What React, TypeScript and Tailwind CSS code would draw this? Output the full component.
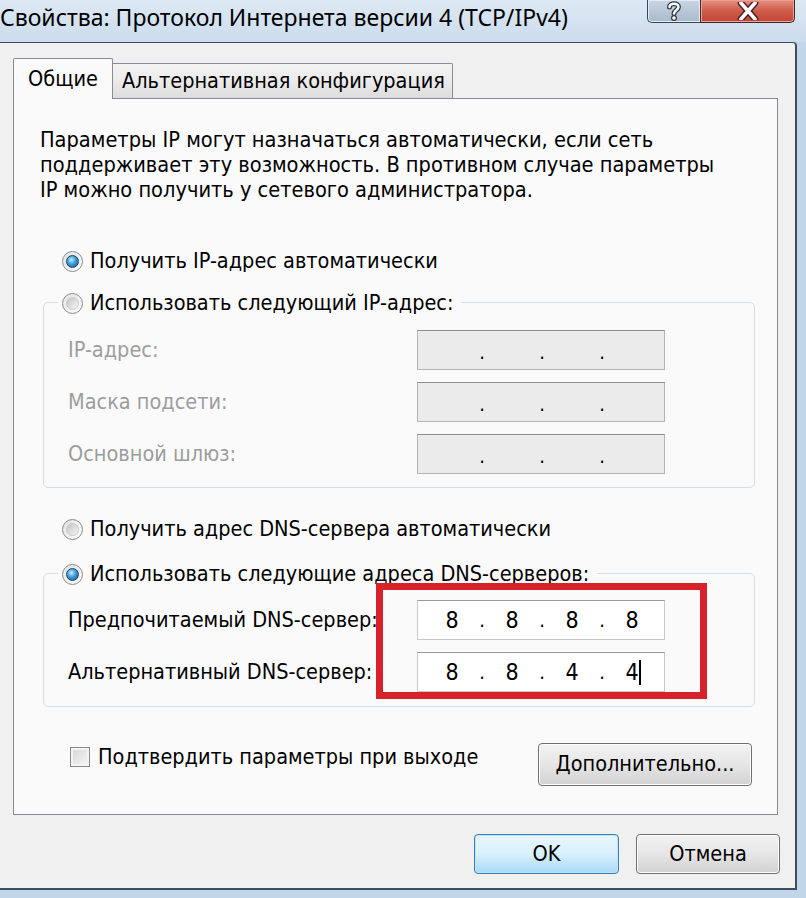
import React from "react";

const F = "font-['DejaVu_Sans_Condensed','DejaVu_Sans',sans-serif]";

function Radio({ checked }: { checked?: boolean }) {
  return (
    <span className="inline-flex h-[21px] w-[21px] shrink-0 items-center justify-center rounded-full border border-[#8a8a8a] bg-gradient-to-br from-[#e2e2e2] to-[#fdfdfd]">
      {checked ? (
        <span className="h-[13px] w-[13px] rounded-full border border-[#1b476b] bg-[radial-gradient(circle_at_40%_35%,#c6ecff_0%,#3a9ad8_45%,#145586_100%)]" />
      ) : (
        <span className="h-[13px] w-[13px] rounded-full border border-[#c8c8c8] bg-gradient-to-br from-[#c4c4c4] to-[#f6f6f6]" />
      )}
    </span>
  );
}

function IpBox({ values, disabled, caret }: { values: string[]; disabled?: boolean; caret?: boolean }) {
  return (
    <div
      className={
        disabled
          ? "flex h-[40px] w-[248px] shrink-0 items-center border border-[#b5b5b5] border-t-[#8d8d8d] bg-[#ebebeb] pl-[10px] pt-[4px]"
          : "flex h-[40px] w-[248px] shrink-0 items-center border border-[#c9c9c9] border-t-[#9a9a9a] bg-white pl-[10px]"
      }
    >
      {values.map((v, i) => (
        <React.Fragment key={i}>
          <span className="relative w-[48px] text-center text-[23px] leading-[30px] text-black">
            {v}
            {caret && i === 3 ? (
              <span className="absolute left-[31px] top-[3px] h-[25px] w-[2px] bg-black" />
            ) : null}
          </span>
          {i < 3 ? (
            <span className="w-[12px] text-center text-[20px] leading-[30px] text-black">.</span>
          ) : null}
        </React.Fragment>
      ))}
    </div>
  );
}

function WinButton({ children, className, primary }: { children: React.ReactNode; className: string; primary?: boolean }) {
  return (
    <div
      className={
        (primary
          ? "border-[#3c7fb1] bg-gradient-to-b from-[#eaf6fd] via-[#d9f0fc] to-[#a7d9f5] shadow-[inset_0_0_0_1px_#bde4f8] "
          : "border-[#707070] bg-gradient-to-b from-[#f2f2f2] via-[#e6e6e6] to-[#d1d1d1] shadow-[inset_0_0_0_1px_#fcfcfc] ") +
        "flex items-center justify-center rounded-[4px] border text-[21.5px] text-black " +
        className
      }
    >
      {children}
    </div>
  );
}

export default function App() {
  return (
    <div className={"flex h-[898px] w-[806px] flex-col overflow-hidden bg-[#c2d6ea] " + F}>
      {/* Title bar */}
      <div className="flex h-[42px] shrink-0 items-start bg-gradient-to-b from-[#dde9f4] to-[#ccdcec]">
        <div className="whitespace-nowrap pt-[2px] font-['Noto_Sans',sans-serif] text-[23px] leading-[30px] text-black">
          Свойства: Протокол Интернета версии 4 (TCP/IPv4)
        </div>
        <div className="ml-auto mr-[11px] flex h-[23px]">
          <div className="flex h-[23px] w-[53px] items-center justify-center rounded-bl-[5px] border-b border-l border-[#3a4656] bg-gradient-to-b from-[#c9d6e3] to-[#a9bacb] shadow-[inset_0_0_0_1px_#e3ebf3]">
            <svg width="16" height="20" viewBox="0 0 16 20">
              <path d="M3.5 6 C3.5 1.5 12.5 1.5 12.5 6 C12.5 9 8 9.5 8 12.5" fill="none" stroke="#2d3a4a" strokeWidth="5" strokeLinecap="round" />
              <path d="M3.5 6 C3.5 1.5 12.5 1.5 12.5 6 C12.5 9 8 9.5 8 12.5" fill="none" stroke="#ffffff" strokeWidth="2.5" strokeLinecap="round" />
              <circle cx="8" cy="17" r="2.4" fill="#ffffff" stroke="#2d3a4a" strokeWidth="1.2" />
            </svg>
          </div>
          <div className="flex h-[23px] w-[95px] items-center justify-center rounded-br-[5px] border-b border-l border-r border-[#3a2a2a] bg-gradient-to-b from-[#e48f82] via-[#cf5a4a] to-[#c44434] shadow-[inset_0_0_0_1px_#eaa297]">
            <svg width="24" height="18" viewBox="0 0 24 18">
              <path d="M5 1 L19 17 M19 1 L5 17" stroke="#4a2222" strokeWidth="6.5" strokeLinecap="round" />
              <path d="M5 1 L19 17 M19 1 L5 17" stroke="#ffffff" strokeWidth="3.6" strokeLinecap="round" />
            </svg>
          </div>
        </div>
      </div>

      {/* Client area */}
      <div className="mb-[8px] mr-[9px] flex flex-1 flex-col rounded-tr-[4px] border-b-2 border-r-2 border-t border-[#3e4d60] bg-[#f0f0f0] pl-[13px] pr-[17px] pt-[15px]">
        {/* Tabs */}
        <div className="flex h-[40px] items-end">
          <div className="relative z-10 -mb-px flex h-[41px] w-[100px] items-start justify-center rounded-t-[2px] border border-b-0 border-[#898c95] bg-[#fafafa] pt-[7px] text-[21.5px] leading-[26px] text-black">
            Общие
          </div>
          <div className="flex h-[35px] items-center rounded-tr-[2px] border border-b-0 border-l-0 border-[#898c95] bg-gradient-to-b from-[#f3f3f3] via-[#ebebeb] to-[#dcdcdc] pl-[9px] pr-[7px] text-[21.5px] leading-[26px] text-black">
            Альтернативная конфигурация
          </div>
        </div>

        {/* Panel */}
        <div className="relative flex h-[717px] flex-col border border-[#898c95] bg-[#fafafa] text-[21.5px] text-black">
          <p className="whitespace-nowrap pl-[26px] pt-[28px] text-[21.6px] leading-[25px]">
            Параметры IP могут назначаться автоматически, если сеть
            <br />
            поддерживает эту возможность. В противном случае параметры
            <br />
            IP можно получить у сетевого администратора.
          </p>

          <div className="ml-[48px] mt-[46px] flex h-[26px] items-center gap-[7px]">
            <Radio checked />
            <span className="leading-[26px]">Получить IP-адрес автоматически</span>
          </div>

          {/* Group 1 */}
          <div className="ml-[29px] mt-[28px] flex w-[712px] flex-col rounded-[5px] border border-[#d5dfe5] pb-[13px]">
            <div className="-mt-[13px] ml-[14px] flex h-[26px] items-center gap-[7px] self-start bg-[#fafafa] pl-[4px] pr-[8px]">
              <Radio />
              <span className="leading-[26px]">Использовать следующий IP-адрес:</span>
            </div>
            <div className="mt-[14px] flex flex-col gap-[12px]">
              {["IP-адрес:", "Маска подсети:", "Основной шлюз:"].map((l) => (
                <div key={l} className="flex h-[40px] items-center">
                  <span className="w-[373px] shrink-0 pl-[24px] text-[#9d9d9d]">{l}</span>
                  <IpBox values={["", "", "", ""]} disabled />
                </div>
              ))}
            </div>
          </div>

          <div className="ml-[48px] mt-[28px] flex h-[26px] items-center gap-[7px]">
            <Radio />
            <span className="leading-[26px]">Получить адрес DNS-сервера автоматически</span>
          </div>

          {/* Group 2 */}
          <div className="ml-[29px] mt-[31px] flex w-[712px] flex-col rounded-[5px] border border-[#d5dfe5] pb-[14px]">
            <div className="-mt-[13px] ml-[14px] flex h-[26px] items-center gap-[7px] self-start bg-[#fafafa] pl-[4px] pr-[8px]">
              <Radio checked />
              <span className="leading-[26px]">Использовать следующие адреса DNS-серверов:</span>
            </div>
            <div className="mt-[13px] flex flex-col gap-[12px]">
              <div className="flex h-[40px] items-center">
                <span className="w-[373px] shrink-0 pl-[24px]">Предпочитаемый DNS-сервер:</span>
                <IpBox values={["8", "8", "8", "8"]} />
              </div>
              <div className="flex h-[40px] items-center">
                <span className="w-[373px] shrink-0 pl-[24px]">Альтернативный DNS-сервер:</span>
                <IpBox values={["8", "8", "4", "4"]} caret />
              </div>
            </div>
          </div>

          {/* Checkbox + Advanced */}
          <div className="ml-[56px] mr-[25px] mt-[36px] flex items-start justify-between">
            <div className="flex h-[28px] items-center gap-[8px]">
              <span className="h-[20px] w-[20px] border border-[#8a8a8a] bg-gradient-to-br from-[#d6d6d6] to-[#f7f7f7] shadow-[inset_0_0_0_2px_#f4f4f4]" />
              <span className="leading-[26px]">Подтвердить параметры при выходе</span>
            </div>
            <WinButton className="h-[43px] w-[214px]">Дополнительно...</WinButton>
          </div>

          {/* Red highlight */}
          <div className="absolute left-[362px] top-[484px] h-[116px] w-[331px] border-[7px] border-[#d7222c]" />
        </div>

        {/* Bottom buttons */}
        <div className="-mr-[2px] mt-[19px] flex justify-end gap-[17px]">
          <WinButton primary className="h-[40px] w-[145px]">OK</WinButton>
          <WinButton className="h-[40px] w-[144px]">Отмена</WinButton>
        </div>
      </div>
    </div>
  );
}
